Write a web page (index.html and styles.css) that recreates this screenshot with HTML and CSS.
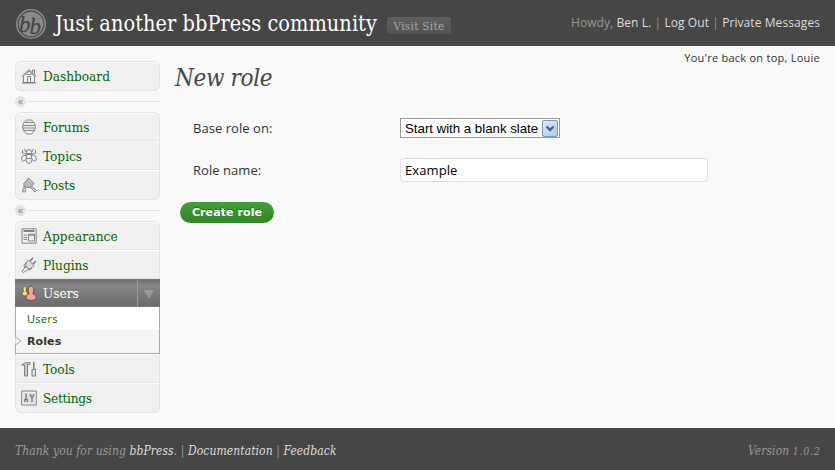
FILE: index.html
```html
<!DOCTYPE html>
<html lang="en">
<head>
<meta charset="utf-8">
<title>New role</title>
<link rel="stylesheet" href="styles.css">
</head>
<body>
<header class="header">
  <svg class="logo" width="32" height="32" viewBox="0 0 32 32"><circle cx="16" cy="16" r="14.2" fill="#464646" stroke="#8b8b8b" stroke-width="1.600"/><circle cx="16" cy="16" r="12.300" fill="#8b8b8b"/><text class="logo-text" x="4" y="23.500">b</text><text class="logo-text" x="14.500" y="25.500">b</text></svg>
  <h1 class="site-title">Just another bbPress community</h1>
  <a class="visit">Visit Site</a>
  <p class="userinfo">Howdy, <a>Ben L.</a> | <a>Log Out</a> | <a>Private Messages</a></p>
</header>
<div class="body">
  <nav class="menu">
    <ul class="group">
      <li class="item"><svg class="icon" viewBox="0 0 16 16"><path d="M.7 8.500L8 1.500l7.300 7M11.500 4.500V2h2v4.500M2.500 8v6.500h11V8M6.500 14V8.500h3V14M1 15h14M5.500 6.500h5M2.500 8L8 3l5.500 5" /></svg><a>Dashboard</a></li>
    </ul>
    <div class="sep"><span class="fold">«</span></div>
    <ul class="group">
      <li class="item"><svg class="icon" viewBox="0 0 16 16"><path d="M5.500 1h5l3 3 1 3.500-1 4-3 3.500h-5l-3-3.500-1-4 1-3.500zM3.500 3.500h9M2 6.500h12M2 9h12M2.500 11.500h11"/></svg><a>Forums</a></li>
      <li class="item"><svg class="icon" viewBox="0 0 16 16"><path d="M5 5.500Q5 1.500 8 1.500t3 4zM5 4L3.500.8M11 4L12.500.8M1.500 2v3l4 1.500M14.500 2v3l-4 1.500M6 7Q.5 7 .7 11T5 11.500M10 7Q15.500 7 15.300 11T11 11.500M6 6.500h4l1 5q0 3.500-3 4-3-.5-3-4zM5.500 10.500h5"/></svg><a>Topics</a></li>
      <li class="item"><svg class="icon" viewBox="0 0 16 16"><path fill="#c4c4c4" d="M7.500 1l5.500 5.500-3.500 4h-4l-3-3.500z"/><path stroke-width=".5" d="M4.500 5.500l4 4.500M6 3.500l5 5"/><path fill="#ddd" d="M10.500 9.500l5 4-1.500 1.500-4.500-4.500zM3 8v3q-3 4 0 4 3 0 1-4V9"/></svg><a>Posts</a></li>
    </ul>
    <div class="sep"><span class="fold">«</span></div>
    <ul class="group">
      <li class="item"><svg class="icon" viewBox="0 0 16 16"><path d="M1 .8h14.200v14.400H1z"/><path d="M2.500 3h11" stroke-width="1.800"/><path d="M7.500 6.200h6v6.800h-6zM2.500 7h3.500M2.500 9.500h3.500M2.500 11.500h3.500M7.500 7.200h6"/></svg><a class="wide">Appearance</a></li>
      <li class="item"><svg class="icon" viewBox="0 0 16 16"><path fill="#dcdcdc" d="M7.500 3l5.700 5.500q-3.500 4.500-7.200 2.500-3.500-3 1.500-8z"/><path stroke-width="1.400" d="M9 4l3-3.200M12 7l3-3"/><path d="M5 5.500q-3 3-1.500 5.500L1 14.500 2.500 15.500 6 13q3.500.5 5-2M4 11l2-2"/></svg><a>Plugins</a></li>
      <li class="item current"><svg class="icon" viewBox="0 0 16 16"><path fill="#ece578" stroke="#776f36" d="M1 10q0-3 1.500-3.500Q1 1.500 3.700 1.500T5 6.500Q7 7 7 10q-3 2-6 0z"/><path fill="#e9a9aa" stroke="#784747" d="M5 14.500q-.5-5 3-5.500Q5.500 1 10 1t2 8q3.800.5 3 5.500-5 2-10 0z"/></svg><a>Users</a><span class="toggle"></span></li>
      <li class="sub">
        <a class="subitem">Users</a>
        <a class="subitem active">Roles<svg class="notch" viewBox="0 0 7 8"><path d="M.5 0L6 4 .5 8" fill="#f9f9f9" stroke="#aaa"/></svg></a>
      </li>
      <li class="item"><svg class="icon" viewBox="0 0 16 16"><path fill="#ccc" d="M.5 4Q3 1 9 1.500v2H6.500V15h-3V4z"/><path fill="#ddd" d="M12.500 1v7.500H11V15h3.500V8.500H13V1z"/></svg><a>Tools</a></li>
      <li class="item"><svg class="icon" viewBox="0 0 16 16"><path d="M.7 1h14.600v14H.7z"/><path fill="#777" stroke="none" d="M2.500 3h11v10h-11z" opacity=".15"/><path stroke-width="1.300" d="M5 3.500V9M3.700 9.500v2.500M6.300 9.500v2.500M3.500 9.700h3M11 12V7.500M9.500 4v2l1.500 1 1.500-1V4"/></svg><a class="narrow">Settings</a></li>
    </ul>
  </nav>
  <main class="main">
    <p class="quote">You're back on top, Louie</p>
    <h2 class="title">New role</h2>
    <form class="form">
      <div class="row"><label>Base role on:</label><div class="select"><span>Start with a blank slate</span><i class="drop"><svg width="10" height="7" viewBox="0 0 10 7"><path d="M1.500 1.500L5 5l3.500-3.500" fill="none" stroke="#4d6185" stroke-width="2.300"/></svg></i></div></div>
      <div class="row second"><label>Role name:</label><input class="input" type="text" value="Example"></div>
      <button class="create" type="button">Create role</button>
    </form>
  </main>
</div>
<footer class="footer">
  <p>Thank you for using <a>bbPress</a>. | <a>Documentation</a> | <a>Feedback</a></p>
  <p class="version">Version <span class="digits">1.0.</span><span class="digits">2</span></p>
</footer>
</body>
</html>
```
FILE: styles.css
```css
* { box-sizing: border-box; }
body { margin: 0; width: 835px; height: 470px; overflow: hidden; display: flex; flex-direction: column; background: #f9f9f9; color: #333; font-family: "Open Sans", sans-serif; font-size: 12px; }
h1, h2, p, ul { margin: 0; padding: 0; font-weight: normal; }
li { list-style: none; }
.header { height: 46px; flex: none; background: #464646; display: flex; align-items: center; padding: 0 15px; color: #999; white-space: nowrap; }
.logo { margin: 2px 8px 0 0; flex: none; }
.logo-text { font: italic 23px "Liberation Serif", serif; fill: #464646; stroke: #464646; stroke-width: .3; }
.site-title { width: 332px; margin-top: 1px; color: #fff; font: 21.500px/30px "DejaVu Serif Condensed", "DejaVu Serif", serif; font-stretch: condensed; letter-spacing: .06px; }
.visit { width: 64px; height: 17px; margin-top: 5px; border-radius: 3px; background: linear-gradient(#5f5f5f, #535353); color: #aaa; font: 11.500px/18px "DejaVu Serif", serif; font-stretch: condensed; letter-spacing: .35px; text-align: center; }
.userinfo { margin: -2px 0 0 auto; font-size: 12px; letter-spacing: .08px; }
.userinfo a { color: #ddd; }
.body { flex: 1; display: flex; min-height: 0; }
.menu { width: 145px; margin: 15px 0 0 15px; flex: none; }
.group { border: 1px solid #e3e3e3; border-radius: 6px; background: #f0f0f0; }
.item { height: 29px; display: flex; align-items: center; padding-left: 5px; color: #060; font: 13.500px/28px "DejaVu Serif", serif; font-stretch: condensed; border-top: 1px solid #fcfcfc; border-bottom: 1px solid #e3e3e3; letter-spacing: 0; }
.item:first-child { height: 28px; border-radius: 6px 6px 0 0; }
.item:last-child { border-bottom: 0; }
.item:only-child { border-bottom: 1px solid #f0f0f0; border-radius: 6px; }
.wide { letter-spacing: .12px; }
.narrow { letter-spacing: -.3px; }
.icon { width: 16px; height: 16px; margin-right: 6px; fill: none; stroke: #777; stroke-width: .9; flex: none; }
.sep { height: 21px; display: flex; align-items: center; }
.sep::after { content: ""; flex: 1; height: 1px; background: #e3e3e3; }
.fold { width: 11px; height: 11px; border-radius: 50%; background: #e3e3e3; color: #888; font: 11px/9px "Open Sans", sans-serif; text-align: center; }
.current { margin: 0 -1px; height: 28px; padding-left: 6px; border-color: #777; background: linear-gradient(#707070, #868686 20%, #6b6b6b); color: #fff; }
.current .icon { stroke-width: 1; }
.toggle { width: 23px; height: 27px; margin-left: auto; border-left: 1px solid #999; display: flex; align-items: center; justify-content: center; }
.toggle::before { content: ""; margin-top: 3px; border: 5.500px solid transparent; border-top: 9px solid #999; border-bottom: 0; }
.sub { margin: 0 -1px; height: 47px; border: 1px solid #aaa; border-top: 0; background: #fff; display: flex; flex-direction: column; }
.subitem { height: 23px; padding-left: 11px; font-size: 11px; line-height: 24px; color: #060; letter-spacing: .35px; }
.active { background: #f5f5f5; color: #333; font: bold 11px/24px "DejaVu Sans", sans-serif; letter-spacing: .1px; position: relative; }
.notch { position: absolute; left: -1px; top: 7px; width: 7px; height: 8px; }
.main { flex: 1; padding: 4px 15px 0; }
.quote { text-align: right; font-size: 11px; line-height: 15px; letter-spacing: .25px; }
.title { margin-top: -4px; color: #464646; font: italic 24px/34px "DejaVu Serif", serif; font-stretch: condensed; letter-spacing: -.35px; }
.form { margin-top: 21px; padding-left: 5px; }
.row { display: flex; height: 24px; align-items: center; padding-left: 13px; }
.second { margin-top: 18px; }
.row label { width: 207px; flex: none; font-size: 13px; letter-spacing: .05px; }
.select { width: 160px; height: 20px; border: 1px solid #999; background: #fff; color: #000; display: flex; align-items: center; justify-content: space-between; padding: 0 1px 0 4px; font: 13.330px "Liberation Sans", sans-serif; letter-spacing: -.04px; white-space: nowrap; }
.drop { width: 16px; height: 17px; border: 1px solid #7b9ac0; border-radius: 2px; background: linear-gradient(135deg, #dce9fb, #b1c9e8); display: flex; align-items: center; justify-content: center; }
.input { width: 308px; height: 24px; border: 1px solid #ddd; border-radius: 4px; padding: 0 4px; font: 13px "Open Sans", sans-serif; letter-spacing: .1px; color: #000; outline: 0; background: #fff; }
.create { display: block; width: 94px; height: 21px; margin-top: 20px; padding: 0; border: 0; border-radius: 11px; background: linear-gradient(#3da334, #318429); color: #fff; font: bold 11px/22px "DejaVu Sans", sans-serif; letter-spacing: .1px; text-shadow: 0 -1px 0 #2a6d24; }
.footer { height: 42px; flex: none; padding: 3px 15px 0; background: #464646; color: #999; display: flex; align-items: center; justify-content: space-between; font: italic 12px "DejaVu Serif", serif; font-stretch: condensed; letter-spacing: .08px; white-space: nowrap; }
.footer a { color: #ddd; }
.digits { font-size: 10.500px; letter-spacing: .8px; }
.digits + .digits { letter-spacing: 0; }
```
